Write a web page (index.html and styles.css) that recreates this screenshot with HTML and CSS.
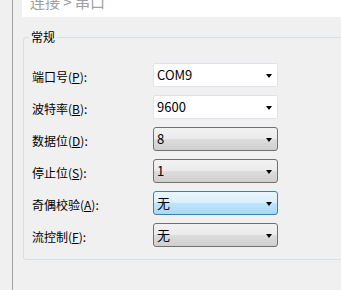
FILE: index.html
```html
<!DOCTYPE html>
<html lang="zh-CN">
<head>
    <meta charset="UTF-8">
    <title>串口</title>
    <link rel="stylesheet" href="styles.css">
</head>
<body>
<div class="page">
    <div class="rail"></div>
    <div class="main">
        <div class="crumb"><span>连接 &gt; 串口</span></div>
        <fieldset class="group">
            <legend>常规</legend>
            <div class="row">
                <label>端口号(<u>P</u>):</label>
                <div class="combo edit">COM9<i class="arrow"></i></div>
            </div>
            <div class="row">
                <label>波特率(<u>B</u>):</label>
                <div class="combo edit">9600<i class="arrow"></i></div>
            </div>
            <div class="row">
                <label>数据位(<u>D</u>):</label>
                <div class="combo">8<i class="arrow"></i></div>
            </div>
            <div class="row">
                <label>停止位(<u>S</u>):</label>
                <div class="combo">1<i class="arrow"></i></div>
            </div>
            <div class="row">
                <label>奇偶校验(<u>A</u>):</label>
                <div class="combo hot">无<i class="arrow"></i></div>
            </div>
            <div class="row">
                <label>流控制(<u>F</u>):</label>
                <div class="combo">无<i class="arrow"></i></div>
            </div>
        </fieldset>
    </div>
</div>
</body>
</html>
```

FILE: styles.css
```css
*{
    margin: 0;
    padding: 0;
    box-sizing: border-box;
}
body{
    background: #f0f0f0;
    font-family: "Noto Sans CJK SC", "Noto Sans", sans-serif;
    font-size: 12px;
    color: #000;
}
.page{
    display: flex;
    height: 290px;
    overflow: hidden;
}
.rail{
    width: 13px;
    flex: none;
    border-right: 1px solid #a0a0a0;
}
.main{
    flex: 1;
    margin-left: 9px;
}
.crumb{
    height: 17px;
    overflow: hidden;
    background: #fff;
    padding-left: 8px;
    color: #a0a0a0;
    font-size: 15px;
}
.crumb span{
    display: block;
    line-height: 16px;
    margin-top: -6px;
}
.group{
    margin: 12px -30px 0 1px;
    border: 1px solid #d5dfe5;
    border-radius: 3px;
    padding: 18px 0 12px 5px;
}
.group legend{
    padding: 0 2px;
    line-height: 16px;
}
.row{
    display: grid;
    grid-template-columns: 121px 125px;
    align-items: center;
    margin-left: 3px;
    height: 24px;
}
.row+.row{
    margin-top: 8px;
}
.row label{
    padding-top: 3px;
}
.combo{
    position: relative;
    height: 24px;
    line-height: 22px;
    padding-left: 3px;
    font-size: 13px;
    border: 1px solid #707070;
    border-radius: 3px;
    background: linear-gradient(#f2f2f2, #ebebeb 50%, #dddddd 50%, #cfcfcf);
}
.combo.edit{
    background: #fff;
    border-color: #e2e3ea;
    border-radius: 2px;
}
.combo.hot{
    border-color: #3c7fb1;
    background: linear-gradient(#eaf6fd, #d9f0fc 50%, #bee6fd 50%, #a7d9f5);
}
.arrow{
    position: absolute;
    right: 5px;
    top: 10px;
    width: 0;
    height: 0;
    border-top: 4px solid #000;
    border-left: 3.5px solid transparent;
    border-right: 3.5px solid transparent;
}
```
